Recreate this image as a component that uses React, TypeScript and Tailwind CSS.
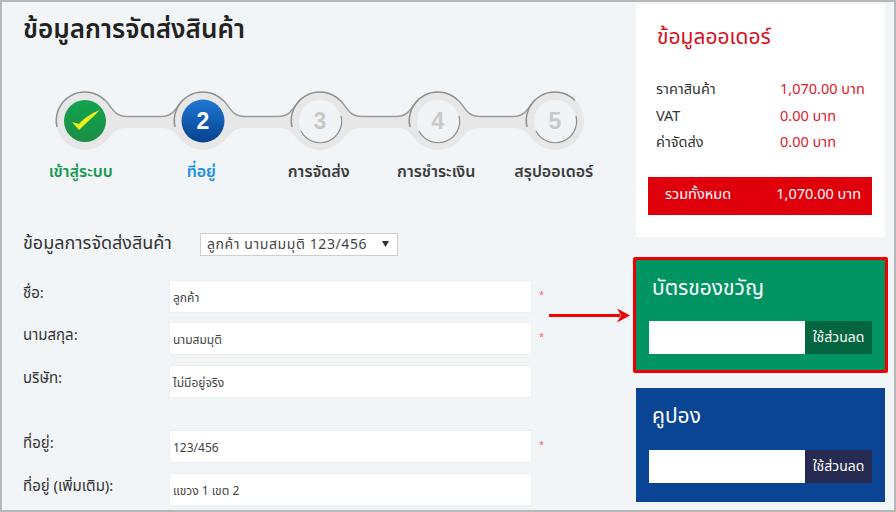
const thai = `"Noto Sans Thai","Noto Sans","Open Sans","Liberation Sans",sans-serif`;

const cs = [83, 201, 318, 436, 553];
const labels = [
  { t: "เข้าสู่ระบบ", c: "text-[#129a4e] pr-[6px]" },
  { t: "ที่อยู่", c: "text-[#1b8fe0]" },
  { t: "การจัดส่ง", c: "text-[#3c3c3c]" },
  { t: "การชำระเงิน", c: "text-[#3c3c3c]" },
  { t: "สรุปออเดอร์", c: "text-[#3c3c3c]" },
];
const cy = 31;

function Stepper() {
  return (
    <svg width="600" height="66" className="block">
      <defs>
        <linearGradient id="g" x1="0" y1="0" x2="0" y2="1">
          <stop offset="0" stopColor="#13a34f" />
          <stop offset="1" stopColor="#1b8f45" />
        </linearGradient>
        <linearGradient id="b" x1="0" y1="0" x2="0" y2="1">
          <stop offset="0" stopColor="#1d78d2" />
          <stop offset="1" stopColor="#06408f" />
        </linearGradient>
      </defs>
      {cs.map((c) => (
        <circle key={c} cx={c} cy={cy} r="29" fill="#e7e7e8" />
      ))}
      {cs.slice(0, 4).map((a, i) => {
        const b = cs[i + 1];
        const top = `M${a + 20} ${cy - 21}C${a + 27} ${cy - 14} ${a + 29} ${cy - 4.5} ${a + 42} ${cy - 4.5}L${b - 42} ${cy - 4.5}C${b - 29} ${cy - 4.5} ${b - 27} ${cy - 14} ${b - 20} ${cy - 21}`;
        return (
          <g key={a}>
            <path
              d={`${top}L${b - 20} ${cy + 21}C${b - 27} ${cy + 14} ${b - 29} ${cy + 7} ${b - 42} ${cy + 7}L${a + 42} ${cy + 7}C${a + 29} ${cy + 7} ${a + 27} ${cy + 14} ${a + 20} ${cy + 21}Z`}
              fill="#e7e7e8"
            />
            <path d={top} fill="none" stroke="#9a9a9a" strokeWidth="1.5" />
          </g>
        );
      })}
      {cs.map((c) => (
        <path key={c} d={`M${c - 28} ${cy + 6}A28.5 28.5 0 0 1 ${c + 20} ${cy - 20.5}`} fill="none" stroke="#8f8f8f" strokeWidth="1.5" />
      ))}
      <circle cx={cs[0]} cy={cy} r="21" fill="url(#g)" />
      <path d={`M${cs[0] - 13} ${cy + 1}L${cs[0] - 6} ${cy + 3}C${cs[0] - 1} ${cy - 3} ${cs[0] + 7} ${cy - 8} ${cs[0] + 15} ${cy - 11}C${cs[0] + 7} ${cy - 3} ${cs[0]} ${cy + 3} ${cs[0] - 6} ${cy + 9}Z`} fill="#eef01a" />
      <circle cx={cs[1]} cy={cy} r="21.5" fill="url(#b)" />
      <text x={cs[1]} y={cy + 8} textAnchor="middle" fill="#fff" fontSize="23" fontWeight="700" fontFamily="Liberation Sans">2</text>
      {[2, 3, 4].map((i) => (
        <g key={i}>
          <circle cx={cs[i]} cy={cy} r="21" fill="#f1f4f6" />
          <path d={`M${cs[i] - 19} ${cy + 10}A21.5 21.5 0 0 0 ${cs[i] + 21} ${cy - 5}`} fill="none" stroke="#8f8f8f" strokeWidth="1.2" />
          <text x={cs[i]} y={cy + 8} textAnchor="middle" fill="#c9c9c9" fontSize="23" fontWeight="700" fontFamily="Liberation Sans">{i + 1}</text>
        </g>
      ))}
    </svg>
  );
}

function Field({ label, value, req, h = "mt-[10px]" }: { label: string; value: string; req?: boolean; h?: string }) {
  return (
    <div className={`flex items-center ${h}`}>
      <div className="w-[146px] text-[15px] text-[#333] -mt-[6px] leading-[20px]">{label}</div>
      <div className="w-[363px] h-[33px] bg-white border border-[#edf0f2] flex items-center pl-[3px] pt-[3px] text-[12px] text-[#444]">{value}</div>
      {req && <span className="ml-[7px] text-[9px] text-[#f4605a] -mt-[2px]">*</span>}
    </div>
  );
}

function Row({ a, b }: { a: string; b: string }) {
  return (
    <div className="flex h-[26.5px] items-center text-[14.5px]">
      <div className="w-[124px] text-[#333]">{a}</div>
      <div className="text-[#d9202c]">{b}</div>
    </div>
  );
}

function Promo({ title, bg, btn, framed }: { title: string; bg: string; btn: string; framed?: boolean }) {
  return (
    <div className={`${bg} ${framed ? "border-[3px] border-[#f00000] rounded-[2px] w-[255px] h-[116px] pl-[13px] pt-[11px]" : "w-[249px] h-[114px] ml-[3px] pl-[13px] pt-[11px]"}`}>
      <div className="text-[21px] leading-[36px] text-white ml-[3px]">{title}</div>
      <div className={`flex h-[33px] ${framed ? "mt-[14px]" : "mt-[15px]"}`}>
        <div className="w-[156px] bg-white" />
        <div className={`w-[67px] ${btn} text-white text-[14px] flex items-center justify-center`}>ใช้ส่วนลด</div>
      </div>
    </div>
  );
}

export default function App() {
  return (
    <div className="relative w-[896px] h-[512px] border-2 border-[#b8b8b8] bg-[#f1f5f8] flex overflow-hidden" style={{ fontFamily: thai }}>
      <div className="w-[631px] shrink-0 pl-[21px]">
        <h1 className="text-[26px] leading-[40px] font-semibold text-[#222] mt-[8px]">ข้อมูลการจัดส่งสินค้า</h1>
        <div className="-ml-[21px] mt-[40px]">
          <Stepper />
        </div>
        <div className="flex -ml-[21px] pl-[23px] mt-[4px]">
          {labels.map((l) => (
            <div key={l.t} className={`w-[117.5px] text-center text-[16px] leading-[24px] font-semibold ${l.c}`}>{l.t}</div>
          ))}
        </div>
        <div className="flex items-center mt-[47px]">
          <div className="w-[177px] text-[18px] leading-[26px] text-[#333]">ข้อมูลการจัดส่งสินค้า</div>
          <div className="w-[198px] h-[23px] bg-white border border-[#cfcfcf] flex items-center justify-between pl-[6px] pr-[8px] text-[14px] tracking-[0.6px] text-[#444]">
            <span>ลูกค้า นามสมมุติ 123/456</span>
            <svg width="7" height="6"><path d="M0 0H7L3.5 6Z" fill="#333" /></svg>
          </div>
        </div>
        <Field label="ชื่อ:" value="ลูกค้า" req h="mt-[23px]" />
        <Field label="นามสกุล:" value="นามสมมุติ" req h="mt-[9px]" />
        <Field label="บริษัท:" value="ไม่มีอยู่จริง" />
        <Field label="ที่อยู่:" value="123/456" req h="mt-[32px]" />
        <Field label="ที่อยู่ (เพิ่มเติม):" value="แขวง 1 เขต 2" />
      </div>
      <div className="w-[258px] shrink-0 pt-[2px] flex flex-col">
        <div className="w-[249px] h-[233px] ml-[3px] bg-white pl-[20px] pt-[15px]">
          <div className="text-[21px] leading-[38px] text-[#d9101c] ml-[1px]">ข้อมูลออเดอร์</div>
          <div className="mt-[21px]">
            <Row a="ราคาสินค้า" b="1,070.00 บาท" />
            <Row a="VAT" b="0.00 บาท" />
            <Row a="ค่าจัดส่ง" b="0.00 บาท" />
          </div>
          <div className="-ml-[8px] mt-[19px] w-[224px] h-[38px] bg-[#e0000c] flex items-center justify-between pl-[17px] pr-[11px] text-[14.5px] text-white">
            <span>รวมทั้งหมด</span>
            <span>1,070.00 บาท</span>
          </div>
        </div>
        <div className="mt-[20px]">
          <Promo title="บัตรของขวัญ" bg="bg-[#009463]" btn="bg-[#046641]" framed />
        </div>
        <div className="mt-[15px]">
          <Promo title="คูปอง" bg="bg-[#0a4595]" btn="bg-[#262a50]" />
        </div>
      </div>
      <svg width="84" height="16" className="absolute left-[546px] top-[306px]">
        <path d="M1 6H72V9H1Z" fill="#f00000" />
        <path d="M69 0.5L82 7.5L69 14.5L73 7.5Z" fill="#f00000" />
      </svg>
    </div>
  );
}
